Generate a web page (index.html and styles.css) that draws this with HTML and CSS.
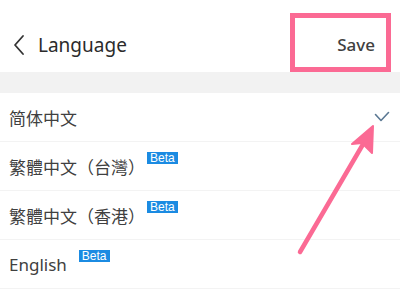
FILE: index.html
```html
<!DOCTYPE html>
<html lang="zh">

<head>
    <meta charset="UTF-8">
    <title>Language</title>
    <!-- estilos -->
    <link rel="stylesheet" href="styles.css">
</head>

<body>
    <div class="screen">
        <!-- barra superior -->
        <div class="topbar">
            <svg class="back" width="12" height="22" viewBox="0 0 12 22">
                <path d="M10 2 L2 11 L10 20" fill="none" stroke="#333" stroke-width="1.8" stroke-linecap="round" stroke-linejoin="round"/>
            </svg>
            <span class="title">Language</span>
            <div class="save-box"><span class="save">Save</span></div>
        </div>
        <div class="band"></div>

        <!-- lista de idiomas -->
        <ul class="langs">
            <li class="lang">
                <span class="name">简体中文</span>
                <svg class="check" width="16" height="12" viewBox="0 0 16 12">
                    <path d="M1.5 3.5 L7 9.5 L14.5 1.5" fill="none" stroke="#5b7893" stroke-width="1.6" stroke-linecap="round" stroke-linejoin="round"/>
                </svg>
            </li>
            <li class="lang">
                <span class="name">繁體中文（台灣）</span><span class="beta">Beta</span>
            </li>
            <li class="lang">
                <span class="name">繁體中文（香港）</span><span class="beta">Beta</span>
            </li>
            <li class="lang">
                <span class="name en">English</span><span class="beta">Beta</span>
            </li>
        </ul>

        <!-- seta de anotação -->
        <svg class="arrow" width="400" height="290" viewBox="0 0 400 290">
            <line x1="300" y1="252" x2="369" y2="134" stroke="#fb6a94" stroke-width="4.5" stroke-linecap="round"/>
            <path d="M373 126 L352 144 L362 143 L372 153 Z" fill="#fb6a94" stroke="#fb6a94" stroke-width="2" stroke-linejoin="round"/>
        </svg>
    </div>
</body>

</html>
```

FILE: styles.css
```css
/* página */
body {
    margin: 0;
    background: #ffffff;
    font-family: "Noto Sans", "Noto Sans CJK SC", sans-serif;
    color: #3d3d3d;
}

.screen {
    position: relative;
    width: 400px;
    height: 290px;
    overflow: hidden;
}

/* barra superior */
.topbar {
    display: flex;
    align-items: center;
    height: 59px;
    padding: 13px 9px 0 13px;
}

.back {
    margin-top: 4px;
}

.title {
    margin-left: 13px;
    font-size: 19px;
    color: #2b2b2b;
    margin-top: 4px;
}

.save-box {
    margin-left: auto;
    box-sizing: border-box;
    width: 101px;
    height: 59px;
    border: 5px solid #fb6a94;
    display: flex;
    align-items: center;
    justify-content: flex-end;
    padding-right: 11px;
    position: relative;
    z-index: 2;
}

.save {
    font-size: 17px;
    font-weight: 500;
    color: #404040;
    margin-top: 4px;
}

/* faixa cinza */
.band {
    height: 21px;
    background: #f2f2f2;
}

/* lista */
.langs {
    list-style: none;
    margin: 0;
    padding: 0;
}

.lang {
    display: flex;
    align-items: center;
    height: 49px;
    padding: 0 10px 0 9px;
    border-bottom: 1px solid #f3f3f3;
    box-sizing: border-box;
}

.name {
    font-size: 17px;
    color: #404040;
}

.beta {
    align-self: flex-start;
    margin-top: 10px;
    margin-left: 2px;
    background: #1b8be2;
    color: #ffffff;
    font-family: "Liberation Sans", sans-serif;
    font-size: 12px;
    line-height: 12px;
    padding: 0 3px;
}

.en + .beta {
    margin-left: 12px;
}

.check {
    margin-left: auto;
    margin-right: 0;
}

/* seta */
.arrow {
    position: absolute;
    left: 0;
    top: 0;
}
```
